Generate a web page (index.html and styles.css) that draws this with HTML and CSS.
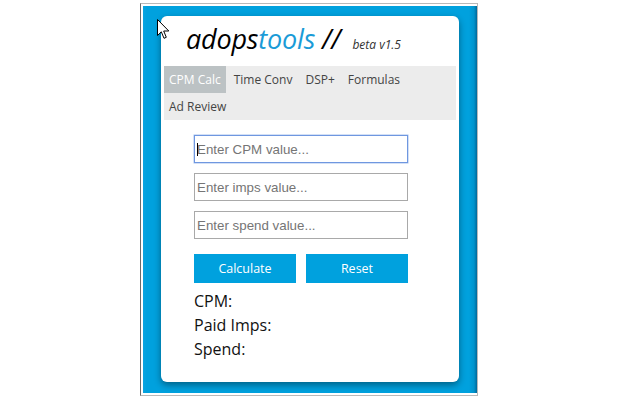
FILE: index.html
```html
<!DOCTYPE html>
<html>
<head>
<meta charset="utf-8">
<link rel="stylesheet" href="styles.css">
</head>
<body>
<div class="frame">
  <div class="popup">
    <div class="card">
      <div class="title">
        <span class="t-main">adops<span class="t-blue">tools</span> //</span>
        <span class="t-beta">beta v1.5</span>
      </div>
      <div class="tabs">
        <span class="tab active">CPM Calc</span>
        <span class="tab">Time Conv</span>
        <span class="tab">DSP+</span>
        <span class="tab">Formulas</span>
        <span class="tab">Ad Review</span>
      </div>
      <div class="form">
        <div class="field-wrap caret">
          <input class="field focused" type="text" placeholder="Enter CPM value...">
        </div>
        <input class="field" type="text" placeholder="Enter imps value...">
        <input class="field" type="text" placeholder="Enter spend value...">
        <div class="buttons">
          <button class="btn">Calculate</button>
          <button class="btn">Reset</button>
        </div>
        <div class="results">
          <div>CPM:</div>
          <div>Paid Imps:</div>
          <div>Spend:</div>
        </div>
      </div>
    </div>
  </div>
  <svg class="pointer" width="13" height="21" viewBox="0 0 13 21">
    <path d="M0.5 0.5 L0.5 16.5 L4.3 12.8 L7 19.3 L9.3 18.3 L6.7 12 L11.8 12 Z" fill="#fff" stroke="#000" stroke-width="1"/>
  </svg>
</div>
</body>
</html>
```

FILE: styles.css
```css
html, body {
  margin: 0;
  padding: 0;
  background: #fff;
}
body {
  width: 640px;
  height: 400px;
  overflow: hidden;
  font-family: "Open Sans", "Liberation Sans", sans-serif;
}
.frame {
  position: relative;
  margin: 3px 0 0 140px;
  width: 338px;
  height: 393px;
  box-sizing: border-box;
  border: 1px solid #b9b9b9;
  border-left-color: #6a6a6a;
  padding: 2px 1px 1px 2px;
}
.popup {
  height: 387px;
  width: 334px;
  box-sizing: border-box;
  padding: 10px 18px 11px 18px;
  background: linear-gradient(to right, #0aa3df 0, #00a1de 4px, #00a1de 326px, #0093cc 331px, #00689a 334px);
}
.card {
  height: 366px;
  background: #fff;
  border-radius: 6px;
  box-shadow: 0 3px 7px rgba(0, 0, 0, 0.4);
  display: flex;
  flex-direction: column;
}
.title {
  height: 50px;
  box-sizing: border-box;
  padding: 8px 0 0 25px;
  display: flex;
  align-items: baseline;
  gap: 12px;
  white-space: nowrap;
}
.t-main {
  font-style: italic;
  font-weight: 400;
  font-size: 27px;
  line-height: 30px;
  color: #000;
  letter-spacing: -0.2px;
}
.t-blue {
  color: #1a9bd7;
}
.t-beta {
  font-style: italic;
  font-size: 12px;
  color: #333;
}
.tabs {
  margin: 0 3px;
  height: 54px;
  background: #ececec;
  display: flex;
  flex-wrap: wrap;
  column-gap: 3px;
  align-content: flex-start;
}
.tab {
  height: 27px;
  line-height: 27px;
  padding: 0 5px;
  font-size: 12px;
  color: #444;
}
.tab.active {
  background: #bcc2c4;
  color: #fff;
}
.form {
  padding: 15px 0 0 33px;
  display: flex;
  flex-direction: column;
  gap: 10px;
}
.field-wrap {
  position: relative;
  width: 214px;
  height: 28px;
}
.caret::after {
  content: "";
  position: absolute;
  left: 3px;
  top: 8px;
  width: 1px;
  height: 13px;
  background: #000;
}
.field {
  display: block;
  width: 214px;
  height: 28px;
  box-sizing: border-box;
  margin: 0;
  border: 1px solid #a9a9a9;
  padding: 0 2px;
  font-family: "Liberation Sans", Arial, sans-serif;
  font-size: 13.33px;
  color: #333;
  outline: none;
}
.field::placeholder {
  color: #757575;
}
.field.focused {
  border-color: #6f97e0;
  box-shadow: 0 0 0 0.5px #a8c1ee;
}
.buttons {
  margin-top: 5px;
  display: flex;
  gap: 10px;
}
.btn {
  width: 102px;
  height: 29px;
  margin: 0;
  border: none;
  padding: 0;
  background: #00a1de;
  color: #fff;
  font-family: "Open Sans", "Liberation Sans", sans-serif;
  font-size: 12.5px;
}
.results {
  margin-top: -4px;
  font-size: 16px;
  line-height: 24px;
  color: #111;
}
.pointer {
  position: absolute;
  left: 16px;
  top: 15px;
}
```
